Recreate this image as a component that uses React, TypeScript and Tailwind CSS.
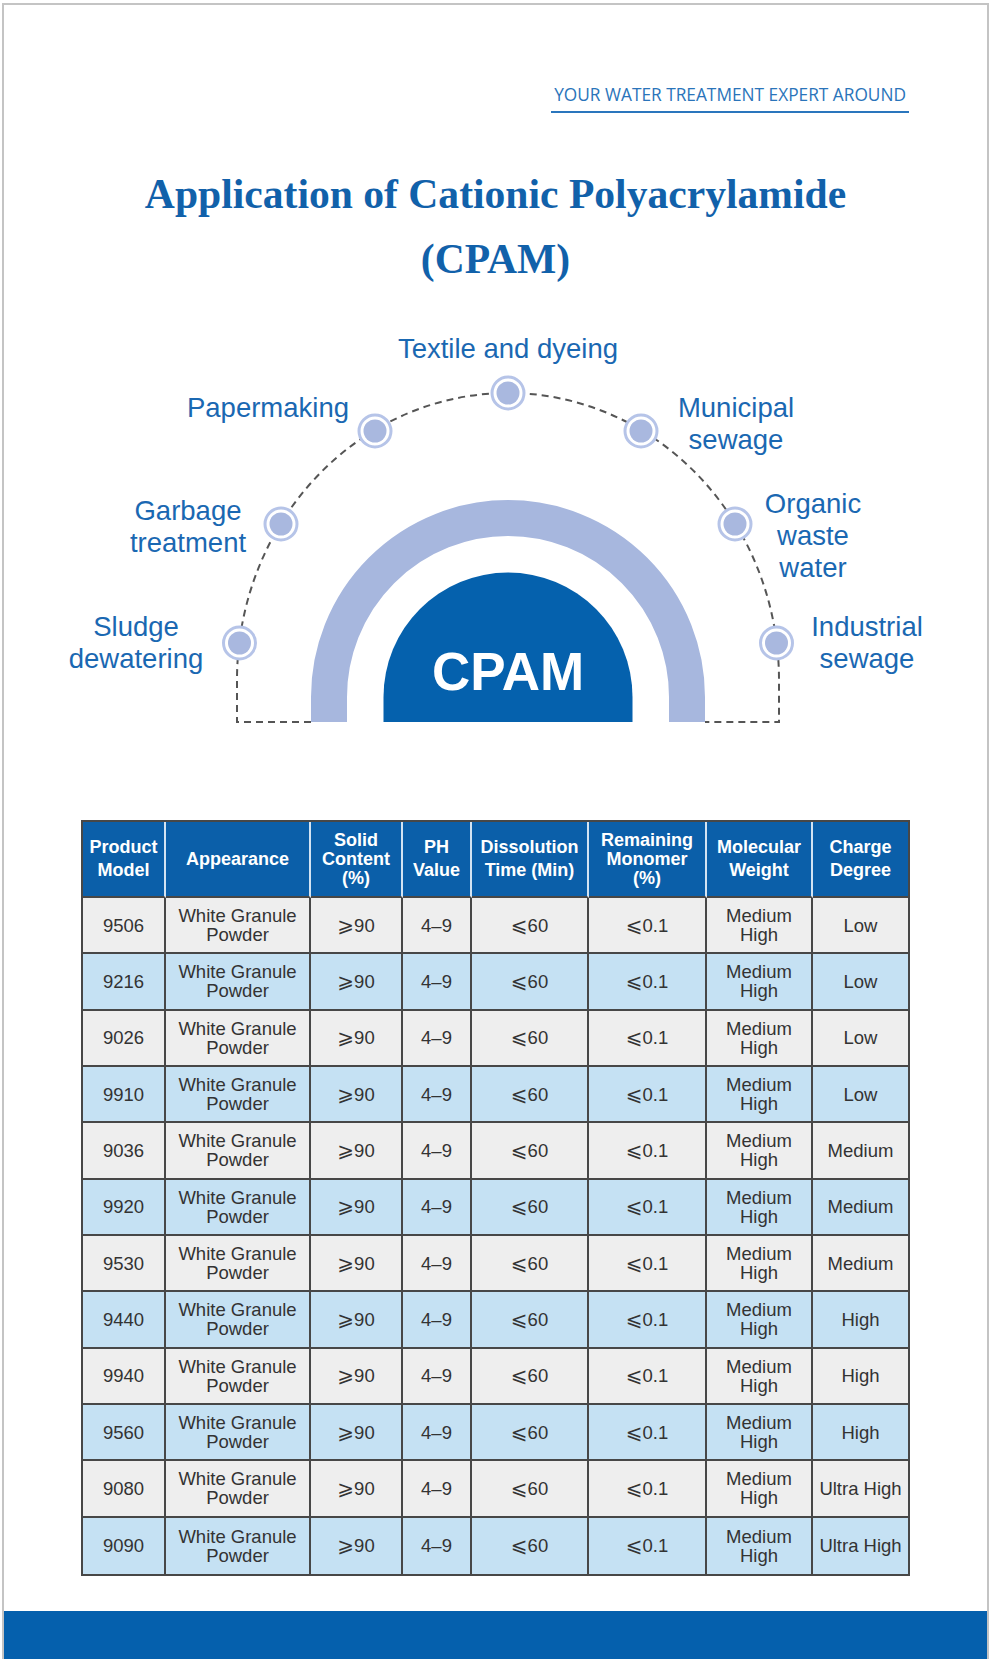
const rows = [
  { model: "9506", charge: "Low" },
  { model: "9216", charge: "Low" },
  { model: "9026", charge: "Low" },
  { model: "9910", charge: "Low" },
  { model: "9036", charge: "Medium" },
  { model: "9920", charge: "Medium" },
  { model: "9530", charge: "Medium" },
  { model: "9440", charge: "High" },
  { model: "9940", charge: "High" },
  { model: "9560", charge: "High" },
  { model: "9080", charge: "Ultra High" },
  { model: "9090", charge: "Ultra High" },
];

const headers = [
  { lines: ["Product", "Model"], tight: false },
  { lines: ["Appearance"], tight: false },
  { lines: ["Solid", "Content", "(%)"], tight: true },
  { lines: ["PH", "Value"], tight: false },
  { lines: ["Dissolution", "Time (Min)"], tight: false },
  { lines: ["Remaining", "Monomer", "(%)"], tight: true },
  { lines: ["Molecular", "Weight"], tight: false },
  { lines: ["Charge", "Degree"], tight: false },
];

const dots = [
  [239.5, 643],
  [281, 524],
  [375, 431],
  [508, 393],
  [641, 431],
  [735, 524],
  [776.5, 643],
];

// value with a slanted ≥ / ≤ sign in front
const Cmp = ({ sign, value }: { sign: string; value: string }) => (
  <span className="whitespace-nowrap">
    <span className="text-[20px]">{sign}</span>
    {value}
  </span>
);

const Diagram = () => {
  return (
    <div className="relative h-[430px] text-[27.5px] leading-[32px] text-[#1a68b2]">
      <svg className="absolute inset-0" width="983" height="430" viewBox="4 300 983 430">
        {/* dashed outline */}
        <path
          d="M 311 722 L 237 722 L 237 680 A 271 287 0 0 1 779 680 L 779 722 L 705 722"
          fill="none"
          stroke="#555"
          strokeWidth="2"
          strokeDasharray="7 5"
        />
        {/* light arch */}
        <path
          d="M 329 722 L 329 697 A 179 179 0 0 1 687 697 L 687 722"
          fill="none"
          stroke="#a7b7de"
          strokeWidth="36"
        />
        {/* dome */}
        <path d="M 383.5 722 L 383.5 697 A 124.5 124.5 0 0 1 632.5 697 L 632.5 722 Z" fill="#0561ad" />
        {dots.map(([cx, cy]) => (
          <g key={cx}>
            <circle cx={cx} cy={cy} r="16" fill="#fff" stroke="#b6c4e8" strokeWidth="3" />
            <circle cx={cx} cy={cy} r="11.5" fill="#a9b8df" />
          </g>
        ))}
      </svg>

      <div className="absolute left-[504px] top-[345px] -translate-x-1/2 text-[53px] leading-[53px] font-bold text-white">
        CPAM
      </div>

      {/* labels */}
      <div className="absolute left-[504px] top-[33px] -translate-x-1/2 whitespace-nowrap text-center">Textile and dyeing</div>
      <div className="absolute left-[264px] top-[92px] -translate-x-1/2 whitespace-nowrap text-center">Papermaking</div>
      <div className="absolute left-[732px] top-[92px] -translate-x-1/2 whitespace-nowrap text-center">
        Municipal<br />sewage
      </div>
      <div className="absolute left-[184px] top-[195px] -translate-x-1/2 whitespace-nowrap text-center">
        Garbage<br />treatment
      </div>
      <div className="absolute left-[809px] top-[188px] -translate-x-1/2 whitespace-nowrap text-center">
        Organic<br />waste<br />water
      </div>
      <div className="absolute left-[132px] top-[311px] -translate-x-1/2 whitespace-nowrap text-center">
        Sludge<br />dewatering
      </div>
      <div className="absolute left-[863px] top-[311px] -translate-x-1/2 whitespace-nowrap text-center">
        Industrial<br />sewage
      </div>
    </div>
  );
};

const SpecTable = () => {
  return (
    <div className="ml-[77px] mt-[90px] w-[829px] border-2 border-[#474747]">
      <div className="grid grid-cols-[83px_145px_92px_69px_117px_118px_106px_95px]">
        {/* header */}
        {headers.map((h, i) => (
          <div
            key={i}
            className={`flex h-[76px] flex-col items-center justify-center border-b-2 border-b-[#474747] bg-[#0b5fa9] text-center text-[18px] font-bold text-white ${
              h.tight ? "leading-[19px]" : "leading-[23px]"
            } ${i < 7 ? "border-r-2 border-r-[#d3e3f2]" : ""}`}
          >
            {h.lines.map((l) => (
              <span key={l}>{l}</span>
            ))}
          </div>
        ))}

        {/* body */}
        {rows.map((r, ri) => {
          const bg = ri % 2 === 0 ? "bg-[#eeeeee]" : "bg-[#c5e1f3]";
          const bottom = ri < rows.length - 1 ? "border-b-2" : "";
          const cells = [
            [r.model],
            ["White Granule", "Powder"],
            [<Cmp key="a" sign="⩾" value="90" />],
            ["4–9"],
            [<Cmp key="b" sign="⩽" value="60" />],
            [<Cmp key="c" sign="⩽" value="0.1" />],
            ["Medium", "High"],
            [r.charge],
          ];
          return cells.map((c, ci) => (
            <div
              key={`${ri}-${ci}`}
              className={`flex h-[56.33px] flex-col items-center justify-center border-[#474747] ${bg} ${bottom} ${
                ci < 7 ? "border-r-2" : ""
              } text-center text-[18.5px] leading-[19px] text-[#333]`}
            >
              {c.map((l, li) => (
                <span key={li} className="whitespace-nowrap">
                  {l}
                </span>
              ))}
            </div>
          ));
        })}
      </div>
    </div>
  );
};

export default function App() {
  return (
    <div
      className="h-[1661px] w-[992px] bg-white pl-[2px] pt-[3px]"
      style={{ fontFamily: '"Liberation Sans", "DejaVu Sans", Arial, sans-serif' }}
    >
      <div className="w-[987px] border-2 border-b-0 border-[#c4c4c4]">
        {/* top tag line */}
        <div className="flex h-[157px] items-start justify-end pr-[78px] pt-[78px]">
          <div
            className="border-b-2 border-[#2a76bd] px-[3px] pb-[4px] text-[17.3px] leading-[24px] text-[#2a74ba]"
            style={{ fontFamily: '"Open Sans", "Noto Sans", sans-serif' }}
          >
            YOUR WATER TREATMENT EXPERT AROUND
          </div>
        </div>

        {/* title */}
        <h1
          className="h-[138px] text-center text-[41.6px] font-bold leading-[65px] text-[#1161aa]"
          style={{ fontFamily: '"Liberation Serif", "Times New Roman", serif' }}
        >
          Application of Cationic Polyacrylamide
          <br />
          (CPAM)
        </h1>

        <Diagram />

        <SpecTable />

        {/* footer bar */}
        <div className="mt-[35px] h-[48px] bg-[#0560ad]" />
      </div>
    </div>
  );
}
